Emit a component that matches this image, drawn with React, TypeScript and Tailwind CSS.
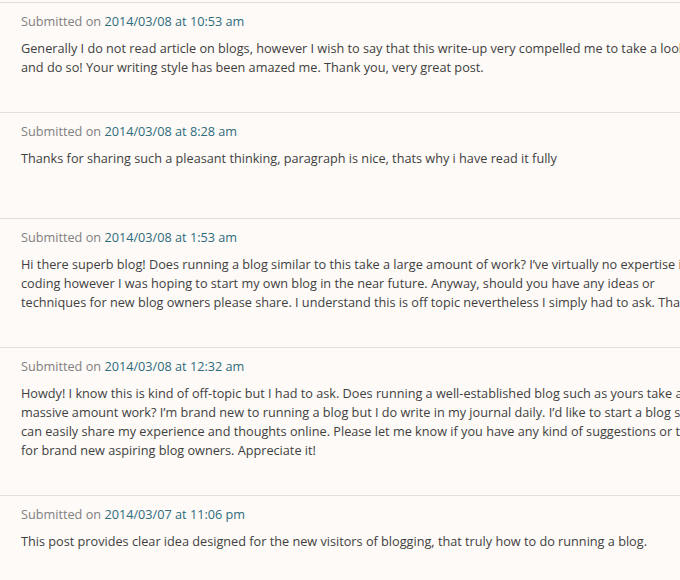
const comments = [
  {
    date: "2014/03/08 at 10:53 am",
    text: "Generally I do not read article on blogs, however I wish to say that this write-up very compelled me to take a look at and do so! Your writing style has been amazed me. Thank you, very great post.",
  },
  {
    date: "2014/03/08 at 8:28 am",
    text: "Thanks for sharing such a pleasant thinking, paragraph is nice, thats why i have read it fully",
  },
  {
    date: "2014/03/08 at 1:53 am",
    text: "Hi there superb blog! Does running a blog similar to this take a large amount of work? I\u2019ve virtually no expertise in coding however I was hoping to start my own blog in the near future. Anyway, should you have any ideas or techniques for new blog owners please share. I understand this is off topic nevertheless I simply had to ask. Thanks!",
  },
  {
    date: "2014/03/08 at 12:32 am",
    text: "Howdy! I know this is kind of off-topic but I had to ask. Does running a well-established blog such as yours take a massive amount work? I\u2019m brand new to running a blog but I do write in my journal daily. I\u2019d like to start a blog so I can easily share my experience and thoughts online. Please let me know if you have any kind of suggestions or tips for brand new aspiring blog owners. Appreciate it!",
  },
  {
    date: "2014/03/07 at 11:06 pm",
    text: "This post provides clear idea designed for the new visitors of blogging, that truly how to do running a blog.",
  },
];

export default function App() {
  return (
    <div className="w-[680px] h-[580px] overflow-hidden bg-[#fdfaf7] pt-[2px] font-['Open_Sans',sans-serif] text-[12.7px]">
      <div className="w-[730px]">
        {comments.map((c) => (
          <div
            key={c.date}
            className="border-t border-[#e2dfdc] min-h-[106px] pl-[21px] pr-[20px] pt-[9px] pb-[35px]"
          >
            <div className="leading-[19px] text-[#808080]">
              Submitted on <a className="text-[#2e6b7d]">{c.date}</a>
            </div>
            <p className="mt-[8px] leading-[19px] text-[#3f3f3f]">{c.text}</p>
          </div>
        ))}
      </div>
    </div>
  );
}
